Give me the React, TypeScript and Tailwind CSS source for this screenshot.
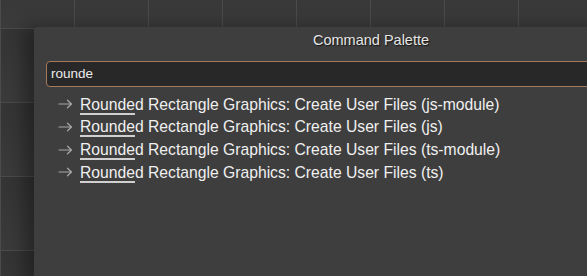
import React from "react";

const items = ["js-module", "js", "ts-module", "ts"];

function Arrow() {
  return (
    <svg width="15" height="10" viewBox="0 0 15 10" className="mr-[7px] shrink-0" fill="none" stroke="#a8a8a8" strokeWidth="1.2" strokeLinecap="round" strokeLinejoin="round">
      <path d="M1 5h12.5M9.5 1.2 13.5 5 9.5 8.8" />
    </svg>
  );
}

export default function App() {
  return (
    <div className="relative w-[587px] h-[276px] overflow-hidden bg-[#383838] font-['Liberation_Sans',Arial,sans-serif]">
      {/* canvas grid behind the palette */}
      <div className="absolute inset-0 bg-[linear-gradient(to_right,#4b4b4b_1px,transparent_1px),linear-gradient(to_bottom,#4b4b4b_1px,transparent_1px),linear-gradient(to_bottom,#343434,#3b3b3b)] bg-[size:74px_74px,74px_74px,74px_74px] bg-[position:0_28px,0_28px,0_28px]" />

      <div className="absolute left-[34px] top-[27px] w-[620px] h-[260px] rounded-tl-[4px] bg-[#3e3e3e] shadow-[-10px_0_18px_rgba(0,0,0,0.35)]">
        <div className="pl-[279px] pt-[4px] h-[34px] text-[14.5px] leading-[18px] text-[#e6e6e6] [text-shadow:1px_1px_1px_rgba(0,0,0,0.7)]">
          Command Palette
        </div>
        <div className="ml-[12px] h-[26px] rounded-[4px] border-[1.5px] border-[#a67a5c] bg-[#282828] flex items-center pl-[4px] text-[13.5px] text-[#ececec]">
          rounde
        </div>
        <ul className="mt-[6px] pl-[24px] flex flex-col">
          {items.map((t) => (
            <li key={t} className="h-[22.7px] flex items-center text-[15.7px] text-[#f0f0f0] whitespace-nowrap">
              <Arrow />
              <span className="underline decoration-[#d0d0d0] decoration-[2px] underline-offset-[3px]">Rounde</span>
              <span>d Rectangle Graphics: Create User Files ({t})</span>
            </li>
          ))}
        </ul>
      </div>
    </div>
  );
}
